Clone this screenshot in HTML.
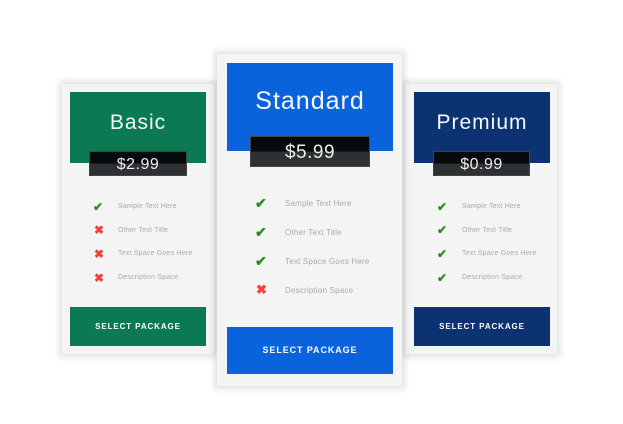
<!DOCTYPE html><html><head><style>
body{margin:0;width:623px;height:424px;background:#fff;position:relative;overflow:hidden;font-family:"Liberation Sans",sans-serif}
.a{position:absolute}
.card{background:#f4f4f5;box-shadow:0 0 6px 3px rgba(0,0,0,.12)}
.hd{color:#f4f8f6;text-align:center;font-weight:normal;letter-spacing:1px}
.pr{background:linear-gradient(#050a0c 0 50%,#2f3031 50% 100%);color:#eee;text-align:center;border:1px solid #444;box-sizing:border-box;letter-spacing:.5px}
.bt{color:#fff;font-weight:bold;text-align:center;letter-spacing:.9px}
.t{color:#aaa;font-size:7px;white-space:nowrap;letter-spacing:.2px}
.ck{color:#2e8b1e;font-weight:bold}
.x{color:#f0433a;font-weight:bold}
</style></head><body>
<!-- Basic -->
<div class="a card" style="left:62px;top:84px;width:152px;height:270px"></div>
<div class="a hd" style="left:70px;top:92px;width:136px;height:71px;background:#0b7a52;font-size:21px;line-height:62px">Basic</div>
<div class="a pr" style="left:89px;top:151px;width:98px;height:25px;font-size:16px;line-height:26px">$2.99</div>
<div class="a ck" style="left:93px;top:200px;font-size:12px">✔</div><div class="a t" style="left:118px;top:203px">Sample Text Here</div>
<div class="a x" style="left:94px;top:223px;font-size:12px">✖</div><div class="a t" style="left:118px;top:227px">Other Text Title</div>
<div class="a x" style="left:94px;top:247px;font-size:12px">✖</div><div class="a t" style="left:118px;top:250px">Text Space Goes Here</div>
<div class="a x" style="left:94px;top:271px;font-size:12px">✖</div><div class="a t" style="left:118px;top:274px">Description Space</div>
<div class="a bt" style="left:70px;top:307px;width:136px;height:39px;background:#0b7a52;font-size:8px;line-height:39px">SELECT PACKAGE</div>
<!-- Premium -->
<div class="a card" style="left:405px;top:84px;width:152px;height:270px"></div>
<div class="a hd" style="left:414px;top:92px;width:136px;height:71px;background:#0c3272;font-size:21px;line-height:62px">Premium</div>
<div class="a pr" style="left:433px;top:151px;width:97px;height:25px;font-size:16px;line-height:26px">$0.99</div>
<div class="a ck" style="left:437px;top:200px;font-size:12px">✔</div><div class="a t" style="left:462px;top:203px">Sample Text Here</div>
<div class="a ck" style="left:437px;top:223px;font-size:12px">✔</div><div class="a t" style="left:462px;top:227px">Other Text Title</div>
<div class="a ck" style="left:437px;top:247px;font-size:12px">✔</div><div class="a t" style="left:462px;top:250px">Text Space Goes Here</div>
<div class="a ck" style="left:437px;top:271px;font-size:12px">✔</div><div class="a t" style="left:462px;top:274px">Description Space</div>
<div class="a bt" style="left:414px;top:307px;width:136px;height:39px;background:#0c3272;font-size:8px;line-height:39px">SELECT PACKAGE</div>
<!-- Standard -->
<div class="a card" style="left:217px;top:54px;width:185px;height:332px"></div>
<div class="a hd" style="left:227px;top:63px;width:166px;height:88px;background:#0a62dd;font-size:25px;line-height:76px">Standard</div>
<div class="a pr" style="left:250px;top:136px;width:120px;height:31px;font-size:19px;line-height:32px">$5.99</div>
<div class="a ck" style="left:255px;top:195px;font-size:14px">✔</div><div class="a t" style="left:285px;top:199px;font-size:8px">Sample Text Here</div>
<div class="a ck" style="left:255px;top:224px;font-size:14px">✔</div><div class="a t" style="left:285px;top:228px;font-size:8px">Other Text Title</div>
<div class="a ck" style="left:255px;top:253px;font-size:14px">✔</div><div class="a t" style="left:285px;top:257px;font-size:8px">Text Space Goes Here</div>
<div class="a x" style="left:256px;top:282px;font-size:13px">✖</div><div class="a t" style="left:285px;top:286px;font-size:8px">Description Space</div>
<div class="a bt" style="left:227px;top:327px;width:166px;height:47px;background:#0a62dd;font-size:9px;line-height:47px">SELECT PACKAGE</div>
</body></html>
